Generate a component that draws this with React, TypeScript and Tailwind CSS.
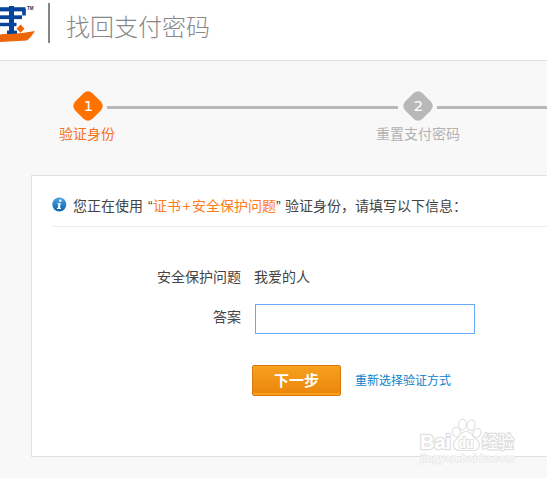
import React from 'react';

function AlipayMark() {
  return (
    <svg width="36" height="48" viewBox="0 0 36 48" className="block shrink-0" aria-hidden="true">
      <g fill="none" stroke="#06449b">
        <path d="M0 9.3H25.5" strokeWidth="4.2" />
        <path d="M24 9V15.5" strokeWidth="3.6" />
        <path d="M11.5 6V34" strokeWidth="5" />
        <path d="M0 17.2H22" strokeWidth="3.8" />
        <path d="M0 24.5H16.5" strokeWidth="3.4" />
        <path d="M7 32.3H17" strokeWidth="3.4" />
      </g>
      <path d="M0 34.5Q5 33.5 10 34Q22 33.5 35 31Q31 37.5 27 40.5Q13 41 0 42Z" fill="#ec6608" />
      <path d="M20.5 24.6L24.5 28.7L20.5 32.8L16.5 28.7Z" fill="#ec6608" />
      <text x="27" y="9.5" fontSize="5" fontWeight="700" fill="#333" textLength="6.5" lengthAdjust="spacingAndGlyphs" fontFamily="Liberation Sans">TM</text>
    </svg>
  );
}

function Diamond({ n, active }: { n: number; active?: boolean }) {
  return (
    <div className="relative flex h-[30px] w-[30px] shrink-0 items-center justify-center">
      <svg viewBox="0 0 30 30" className="absolute inset-0 h-[30px] w-[30px]" aria-hidden="true">
        <path
          d="M10.5 2.2Q15-1.6 19.5 2.2L27.8 10.5Q31.6 15 27.8 19.5L19.5 27.8Q15 31.6 10.5 27.8L2.2 19.5Q-1.6 15 2.2 10.5Z"
          fill={active ? '#ff7200' : '#b8b8b8'}
        />
      </svg>
      <span className="relative scale-x-110 font-['DejaVu_Sans',sans-serif] text-[14px] leading-[28px] text-white">{n}</span>
    </div>
  );
}

function Watermark() {
  return (
    <svg className="absolute left-[416px] top-[416px]" width="104" height="52" viewBox="0 0 104 52" aria-hidden="true">
      <g fill="#fff" stroke="#e0e0e0" strokeWidth="1.2">
        <g strokeWidth="2.6" strokeLinejoin="round" paintOrder="stroke">
          <text x="4" y="33" fontSize="21" fontWeight="700" textLength="31" lengthAdjust="spacingAndGlyphs" fontFamily="Liberation Sans">Bai</text>
          <text x="66" y="32" fontSize="17" textLength="32" lengthAdjust="spacingAndGlyphs" fontFamily="Noto Sans CJK SC">经验</text>
        </g>
        <ellipse cx="40.5" cy="16" rx="4" ry="4.8" transform="rotate(-18 40.5 16)" />
        <ellipse cx="46.5" cy="8.5" rx="3.9" ry="5.3" />
        <ellipse cx="55" cy="9" rx="3.9" ry="5.3" transform="rotate(12 55 9)" />
        <ellipse cx="61" cy="17" rx="3.8" ry="4.8" transform="rotate(20 61 17)" />
        <path d="M50 15.5C44.5 15.5 44 20 40 23.5C35.5 27.5 37 34.5 44 34.5H57C64.5 34.5 65 27 60.5 23.5C56 20 56 15.5 50 15.5Z" />
        <text x="42.5" y="31.5" fontSize="14" fontWeight="700" strokeWidth="2" paintOrder="stroke" textLength="15" lengthAdjust="spacingAndGlyphs" fontFamily="Liberation Sans">du</text>
      </g>
      <text x="4" y="46" fontSize="11" fontWeight="700" fill="#f7f7f7" stroke="#e6e6e6" strokeWidth="1" paintOrder="stroke" textLength="95" lengthAdjust="spacingAndGlyphs" fontFamily="Liberation Sans">jingyan.baidu.com</text>
    </svg>
  );
}

export default function App() {
  return (
    <div className="relative h-[478px] w-[547px] overflow-hidden bg-[#f8f8f8] font-['Liberation_Sans','Noto_Sans_CJK_SC',sans-serif] text-[14px] leading-5 text-[#444]">
      <header className="flex h-[61px] items-start border-b border-[#e1e1e1] bg-white">
        <AlipayMark />
        <div className="ml-3 mt-[3px] h-10 w-[2px] bg-[#858585]" />
        <h1 className="ml-4 mt-[10px] whitespace-nowrap text-[24px] font-light leading-9 text-[#888]">找回支付密码</h1>
      </header>

      <nav className="h-[114px] pt-[30px]">
        <div className="flex items-center pl-[73px]">
          <Diamond n={1} active />
          <div className="ml-1 mr-[5px] h-[3px] w-[291px] shrink-0 translate-y-px bg-[#b8b8b8]" />
          <Diamond n={2} />
          <div className="ml-1 h-[3px] flex-1 translate-y-px bg-[#b8b8b8]" />
        </div>
        <div className="mt-[3px] flex whitespace-nowrap pl-[59px]">
          <span className="w-[317px] shrink-0 text-[#f47121]">验证身份</span>
          <span className="text-[#b2b2b2]">重置支付密码</span>
        </div>
      </nav>

      <main className="ml-[31px] h-[282px] border-y border-l border-[#e1e1e1] bg-white pl-5 pt-5">
        <div className="flex h-[31px] items-start whitespace-nowrap border-b border-[#ededed]">
          <svg width="15" height="15" viewBox="0 0 15 15" className="mt-px shrink-0" aria-hidden="true">
            <defs>
              <linearGradient id="info" x2="0" y2="1">
                <stop stopColor="#4aa3df" />
                <stop offset="1" stopColor="#0d62ae" />
              </linearGradient>
            </defs>
            <circle cx="7.3" cy="7.5" r="7" fill="url(#info)" />
            <circle cx="8.3" cy="3.7" r="1.3" fill="#fff" />
            <path d="M5.3 6.2H8.9L7.8 10.8H9V12H4.9V11H5.8L6.5 7.2H5.3Z" fill="#fff" />
          </svg>
          <p className="ml-[6px] flex">
            <span className="w-[75px]">您正在使用</span>
            <span className="w-[5px]">“</span>
            <span className="w-[28px] text-[#ff7b1a]">证书</span>
            <span className="w-[11px] text-center text-[#ff7b1a]">+</span>
            <span className="w-[84px] text-[#ff7b1a]">安全保护问题</span>
            <span className="w-[9px]">”</span>
            <span>验证身份，请填写以下信息：</span>
          </p>
        </div>

        <form className="pt-10" onSubmit={(e) => e.preventDefault()}>
          <div className="flex h-5">
            <label className="w-[189px] text-right">安全保护问题</label>
            <span className="ml-[13px]">我爱的人</span>
          </div>
          <div className="mt-[17px] flex h-[30px]">
            <label htmlFor="answer" className="mt-[3px] w-[189px] text-right">答案</label>
            <input id="answer" className="ml-[14px] h-[30px] w-[220px] border border-[#66a9f5] bg-white px-2 outline-none" />
          </div>
          <div className="mt-[31px] flex items-center pl-[200px]">
            <button className="h-[31px] w-[89px] rounded-[2px] border border-[#d9780e] bg-linear-to-b from-[#f6a11c] to-[#eb850c] text-[15px] font-bold leading-[28px] text-white shadow-[inset_0_-2px_0_#f9a11b]">下一步</button>
            <a href="#" className="ml-[14px] text-[12px] text-[#0a82c8]">重新选择验证方式</a>
          </div>
        </form>
      </main>
      <Watermark />
    </div>
  );
}
